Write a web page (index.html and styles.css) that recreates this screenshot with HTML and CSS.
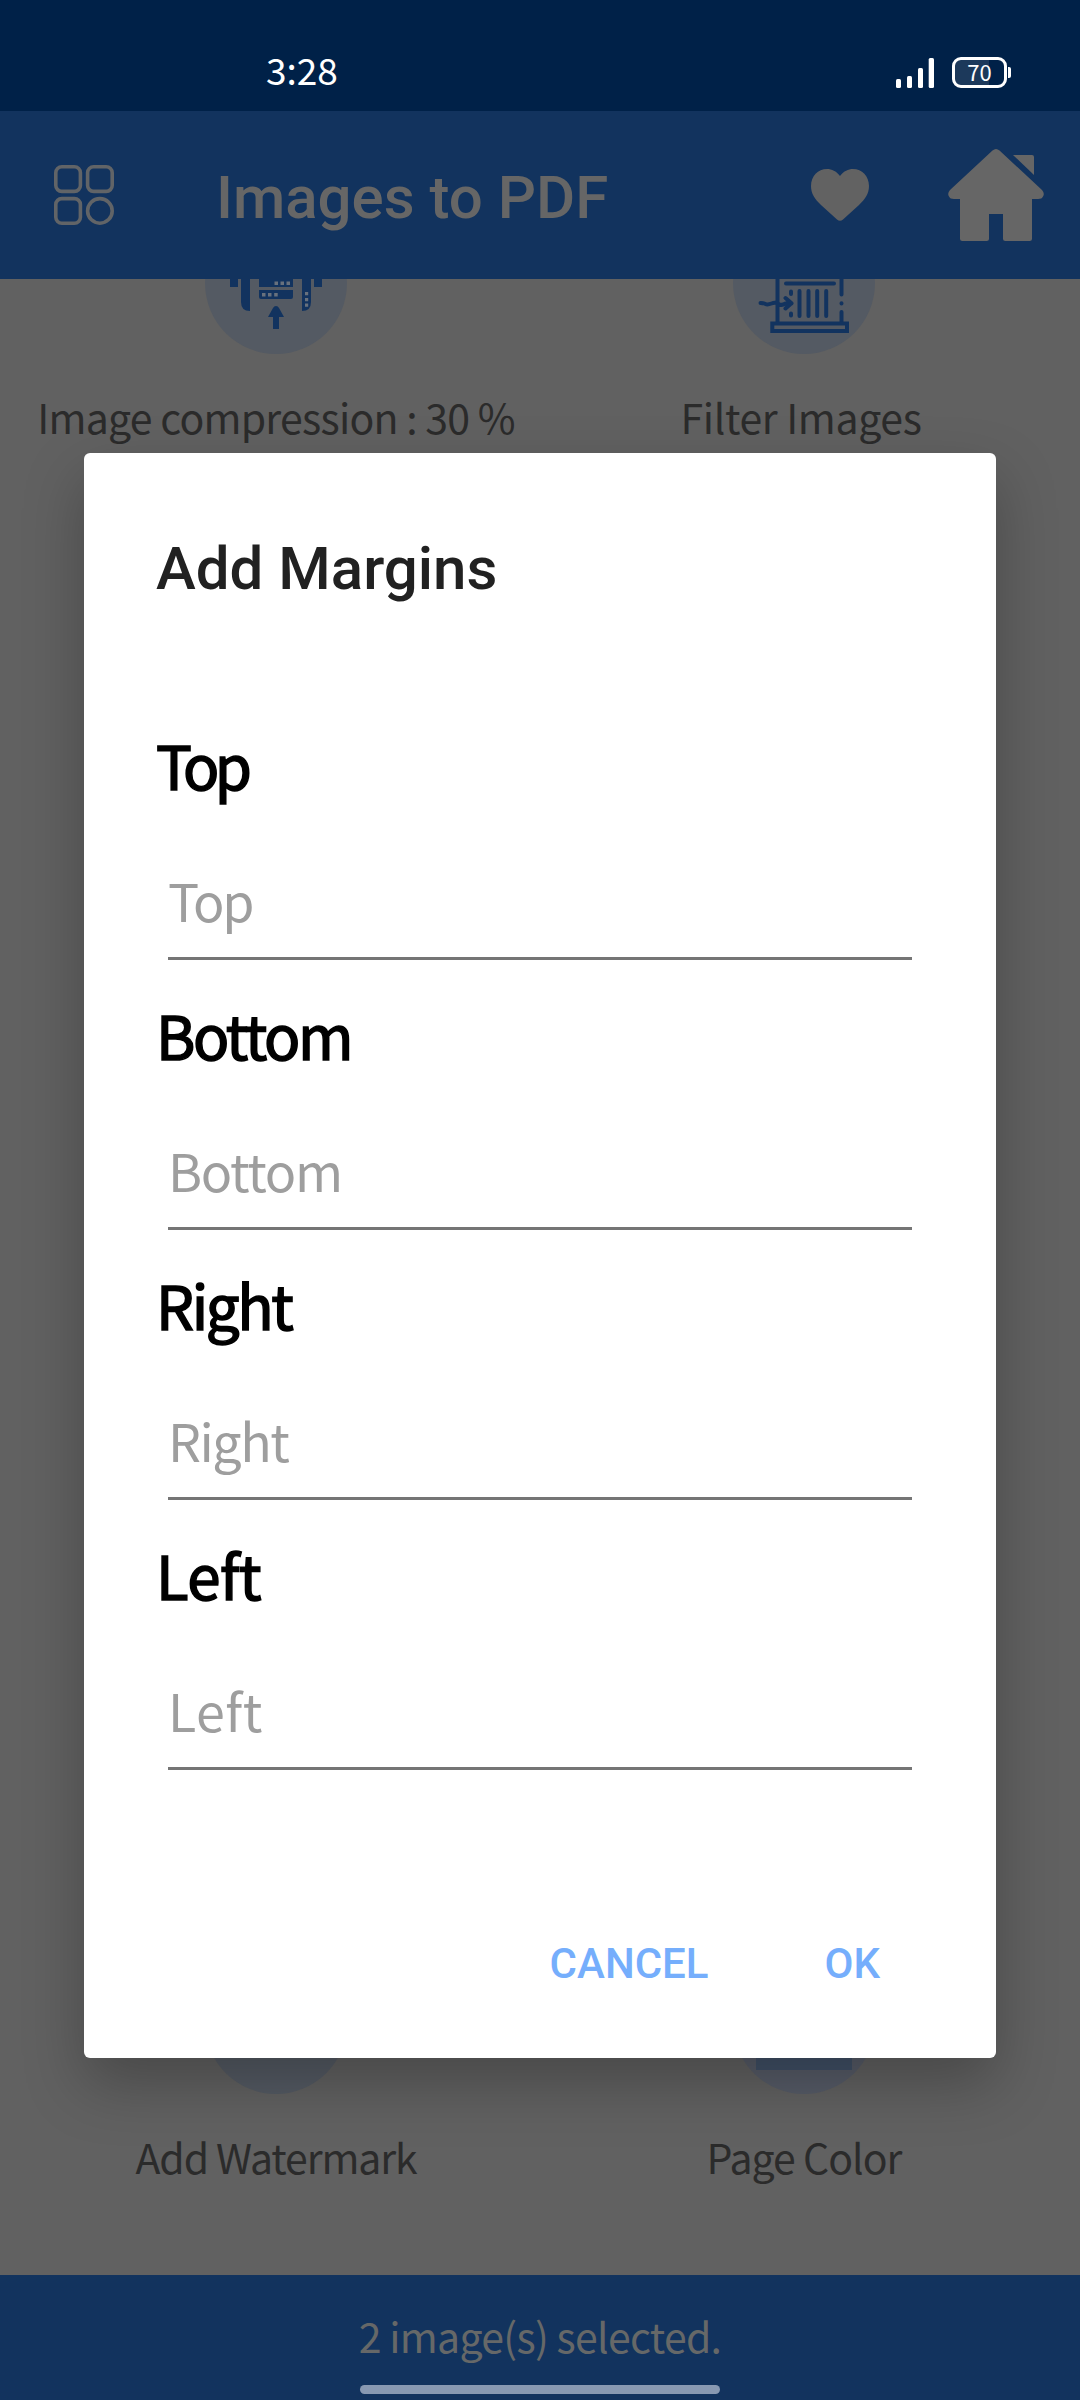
FILE: index.html
```html
<!DOCTYPE html>
<html lang="en">
<head>
<meta charset="utf-8">
<title>Images to PDF</title>
<link rel="stylesheet" href="styles.css">
</head>
<body>
<div class="app">
  <div class="status">
    <span class="time">3:28</span>
    <div class="status-icons">
      <svg width="38" height="32" viewBox="0 0 38 32" fill="#fff"><rect y="22" width="5" height="9" rx="1.5"/><rect x="11" y="19" width="5" height="12" rx="1.5"/><rect x="22" y="11" width="5" height="20" rx="1.5"/><rect x="32.700" y="1" width="5.300" height="30" rx="1.500"/></svg>
      <div class="battery"><span class="charge">70</span></div>
    </div>
  </div>
  <header class="toolbar">
    <svg class="menu" width="60" height="60" viewBox="0 0 60 60" fill="none" stroke="#616467" stroke-width="3.600"><rect x="1.800" y="1.800" width="24.600" height="24.600" rx="6"/><rect x="33.600" y="1.800" width="24.600" height="24.600" rx="6"/><rect x="1.800" y="33.600" width="24.600" height="24.600" rx="6"/><circle cx="45.900" cy="45.900" r="12.300"/></svg>
    <h1 class="title">Images to PDF</h1>
    <svg class="heart" width="58" height="54" viewBox="0 0 58 52" fill="#626262"><path d="M29 7C25 2 21 0 16 0C7 0 0 7 0 17C0 25 4 30 10 36L26 50.500Q29 53 32 50.500L48 36C54 30 58 25 58 17C58 7 51 0 42 0C37 0 33 2 29 7Z"/></svg>
    <svg class="home" width="96" height="92" viewBox="0 0 96 92" fill="#666"><path d="M44.500 1.500Q48 -1.500 51.500 1.500L94 41Q97 44.500 95 47.500Q94 50 90 50H84V89.500Q84 92 81.500 92H57.500Q55 92 55 89.500V65H41V89.500Q41 92 38.500 92H14.500Q12 92 12 89.500V50H6Q2 50 1 47.500Q-1 44.500 2 41Z"/><path d="M65 6H84Q86 6 86 8V26Z"/></svg>
  </header>
  <main class="options">
    <section class="row">
      <div class="option">
        <svg class="badge" viewBox="205 212 142 142"><circle cx="276" cy="283" r="71" fill="#545a63"/><g fill="#12335f"><path d="M230 250h8v37h-8zM314 250h8v37h-8zM241 250h9v61q-9 0-9-9zM302 250h9v52q0 9-9 9zM259 250h34v37h-34zM259 290h34v7q0 2-2 2h-30q-2 0-2-2zM276 306q2 0 3 2l5 9h-5v12h-6v-12h-5l5-9q1-2 3-2z"/></g><g fill="#68717d"><path d="M274.500 281.500h3.500v3.500h-3.500zM280.500 281.500h3.500v3.500h-3.500zM286.500 281.500h3.500v3.500h-3.500zM262 293h3.500v3.500h-3.500zM268 293h3.500v3.500h-3.500zM274.200 293h3.500v3.500h-3.500zM305 292h3.200v3.200h-3.200zM305 298h3.200v3.200h-3.200zM305 303.500h3.200v3.200h-3.200z"/></g></svg>
        <span class="label compression">Image compression : 30 %</span>
      </div>
      <div class="option">
        <svg class="badge" viewBox="733 212 142 142"><circle cx="804" cy="283" r="71" fill="#545a63"/><g fill="none" stroke="#12335f" stroke-width="4" stroke-linecap="round" stroke-linejoin="round"><path d="M777.500 250V322M786 283.500H834M799.500 291V316M808.500 291V316M817.200 291V316M826.200 291V316M791 291.500V294M791 313.500V315.500M841.500 250V294.500M841.500 303.300V303.400M841.500 312V322M760.500 303q3 0 5 1t6 -.5t7 .5t7 -.5h6M785.500 298L791.500 303.300L785.500 308.500"/><path d="M772.300 323.500H847V331H772.300Z" stroke-linejoin="miter"/></g></svg>
        <span class="label filter">Filter Images</span>
      </div>
    </section>
    <section class="row">
      <div class="option">
        <svg class="badge" viewBox="0 0 142 142"><circle cx="71" cy="71" r="71" fill="#545a63"/></svg>
        <span class="label watermark">Add Watermark</span>
      </div>
      <div class="option">
        <svg class="badge" viewBox="0 0 142 142"><circle cx="71" cy="71" r="71" fill="#565b67"/><rect x="23" y="28" width="96" height="90" fill="#405066"/></svg>
        <span class="label color">Page Color</span>
      </div>
    </section>
  </main>
  <footer class="footer">
    <span class="selected">2 image(s) selected.</span>
    <div class="handle"></div>
  </footer>
</div>
<div class="dialog">
  <h2 class="dialog-title">Add Margins</h2>
  <div class="fields">
    <div class="field"><span class="name n-top">Top</span><div class="input h-top">Top</div></div>
    <div class="field"><span class="name n-bottom">Bottom</span><div class="input h-bottom">Bottom</div></div>
    <div class="field"><span class="name n-right">Right</span><div class="input h-right">Right</div></div>
    <div class="field"><span class="name n-left">Left</span><div class="input h-left">Left</div></div>
  </div>
  <div class="actions"><span class="cancel">CANCEL</span><span class="ok">OK</span></div>
</div>
</body>
</html>
```

FILE: styles.css
```css
* { box-sizing: border-box; }
body { margin: 0; width: 1080px; height: 2400px; overflow: hidden; position: relative; font-family: "Noto Sans CJK SC", "Noto Sans", sans-serif; }
svg { display: block; flex: none; }
h1, h2 { margin: 0; font: 500 60px/72px Roboto, sans-serif; white-space: nowrap; }
.app { height: 2400px; display: flex; flex-direction: column; background: #616161; }
.status { height: 111px; flex: none; background: #002148; color: #fff; display: flex; justify-content: space-between; padding: 0 69px 0 266px; }
.time { font-size: 37px; line-height: 50px; padding-top: 44px; }
.status-icons { display: flex; gap: 17px; padding-top: 57px; align-items: flex-start; }
.battery { position: relative; width: 55px; height: 31px; border: 3px solid #fff; border-radius: 9px; margin: 0 4px 0 1px; background: linear-gradient(90deg, #1c395b 70%, transparent 70%); text-align: center; }
.battery::after { content: ""; position: absolute; right: -7px; top: 7px; width: 3px; height: 11px; background: #fff; border-radius: 0 2px 2px 0; }
.charge { display: block; font-size: 22px; line-height: 23px; font-weight: 400; }
.toolbar { height: 168px; flex: none; background: #12335e; color: #666; display: flex; align-items: flex-start; padding-left: 54px; position: relative; z-index: 1; }
.menu { margin-top: 54px; }
.title { margin: 51px 0 0 102px; width: 390px; }
.heart { margin: 57px 0 0 205px; }
.home { margin: 38px 0 0 79px; }
.options { height: 1996px; flex: none; display: flex; flex-direction: column; justify-content: space-between; padding: 0 12px 89px; }
.row { display: grid; grid-template-columns: 1fr 1fr; }
.row:first-child { margin-top: -67px; }
.option { display: flex; flex-direction: column; align-items: center; gap: 32px; }
.badge { width: 142px; height: 142px; }
.label { font-size: 41px; line-height: 60px; color: #2b2b2b; white-space: nowrap; }
.compression { letter-spacing: -.75px; }
.filter { letter-spacing: -.35px; padding-right: 6px; }
.watermark { letter-spacing: -1.15px; }
.color { letter-spacing: -1px; }
.footer { height: 125px; flex: none; background: #12335e; color: #666868; display: flex; flex-direction: column; align-items: center; padding-top: 30px; }
.selected { font-size: 41px; line-height: 60px; letter-spacing: -.7px; white-space: nowrap; }
.handle { width: 360px; height: 9px; border-radius: 5px; background: #8899b2; margin-top: 20px; }
.dialog { position: absolute; left: 84px; top: 453px; width: 912px; height: 1605px; background: #fff; border-radius: 6px; box-shadow: 0 26px 60px rgba(0, 0, 0, .26); padding: 80px 84px 0 72px; display: flex; flex-direction: column; }
.dialog-title { color: #212121; }
.fields { margin-top: 119px; }
.field { height: 270px; display: flex; flex-direction: column; }
.name { font-size: 60px; line-height: 80px; color: #000; -webkit-text-stroke: 1.5px #000; }
.n-top { letter-spacing: -4.5px; }
.n-bottom { letter-spacing: -2.4px; }
.n-right { letter-spacing: -2.4px; }
.n-left { letter-spacing: -.5px; }
.input { margin: 54px 0 0 12px; height: 102px; padding-top: 4px; border-bottom: 3px solid #757575; font-size: 52px; line-height: 76px; color: #9e9e9e; }
.h-top { letter-spacing: -2.3px; }
.h-bottom { letter-spacing: -1.3px; }
.h-right { letter-spacing: -1.5px; }
.h-left { letter-spacing: .5px; }
.actions { display: flex; justify-content: flex-end; gap: 116px; margin-top: 135px; padding-right: 32px; font: 500 42px/50px Roboto, sans-serif; color: #75aefc; }
```
